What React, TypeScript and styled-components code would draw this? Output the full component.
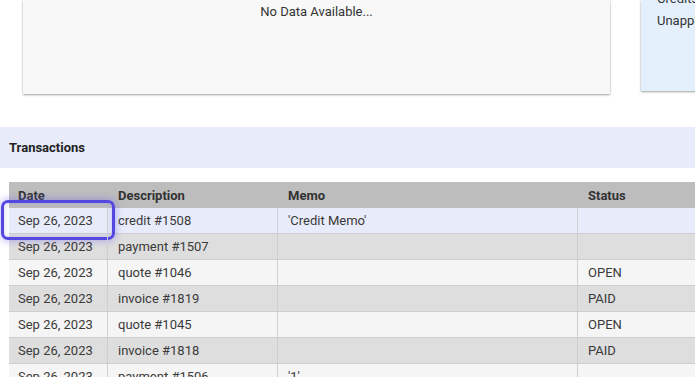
import React from 'react';
import styled, {createGlobalStyle} from 'styled-components';

const GlobalStyle = createGlobalStyle`
    html, body {
        margin: 0;
        padding: 0;
        background: #ffffff;
        overflow: hidden;
    }
    body {
        font-family: Roboto, "Liberation Sans", Arial, sans-serif;
        color: #333333;
    }
`;

interface Transaction {
    date: string;
    description: string;
    memo: string;
    status: string;
}

const transactions: Transaction[] = [
    {date: 'Sep 26, 2023', description: 'credit #1508', memo: "'Credit Memo'", status: ''},
    {date: 'Sep 26, 2023', description: 'payment #1507', memo: '', status: ''},
    {date: 'Sep 26, 2023', description: 'quote #1046', memo: '', status: 'OPEN'},
    {date: 'Sep 26, 2023', description: 'invoice #1819', memo: '', status: 'PAID'},
    {date: 'Sep 26, 2023', description: 'quote #1045', memo: '', status: 'OPEN'},
    {date: 'Sep 26, 2023', description: 'invoice #1818', memo: '', status: 'PAID'},
    {date: 'Sep 26, 2023', description: 'payment #1506', memo: "'1'", status: ''},
];

const columns = [
    {key: 'date', label: 'Date', width: 99},
    {key: 'description', label: 'Description', width: 170},
    {key: 'memo', label: 'Memo', width: 300},
    {key: 'status', label: 'Status', width: 220},
] as const;

const App = () => {
    return (
        <Page>
            <GlobalStyle/>
            <CardsRow>
                <EmptyCard>
                    <EmptyText>{'No Data Available...'}</EmptyText>
                </EmptyCard>
                <SummaryCard>
                    <SummaryLines>
                        <SummaryLine>{'Credits: $0.00'}</SummaryLine>
                        <SummaryLine>{'Unapplied Payments: $0.00'}</SummaryLine>
                    </SummaryLines>
                </SummaryCard>
            </CardsRow>
            <SectionBar>
                <SectionTitle>{'Transactions'}</SectionTitle>
            </SectionBar>
            <Table>
                <HeaderRow>
                    {columns.map((col) => (
                        <HeaderCell
                            key={col.key}
                            $width={col.width}
                        >
                            {col.label}
                        </HeaderCell>
                    ))}
                </HeaderRow>
                {transactions.map((t, i) => (
                    <Row
                        key={t.description}
                        $tone={i === 0 ? 'selected' : (i % 2 === 1 ? 'dark' : 'light')}
                    >
                        {columns.map((col) => (
                            <Cell
                                key={col.key}
                                $width={col.width}
                                $focused={i === 0 && col.key === 'date'}
                            >
                                {t[col.key]}
                            </Cell>
                        ))}
                    </Row>
                ))}
            </Table>
        </Page>
    );
};

const Page = styled.div`
    width: 695px;
    height: 377px;
    overflow: hidden;
    display: flex;
    flex-direction: column;

    & > * {
        flex-shrink: 0;
    }
`;

const CardsRow = styled.div`
    display: flex;
    align-items: flex-start;
    gap: 31px;
    padding-left: 23px;
    height: 95px;
`;

const EmptyCard = styled.div`
    width: 587px;
    height: 94px;
    flex: none;
    background: #f8f8f8;
    box-shadow: 0 1px 2px rgba(0, 0, 0, 0.35), 0 0 1px rgba(0, 0, 0, 0.15);
    display: flex;
    justify-content: center;
`;

const EmptyText = styled.div`
    font-size: 13px;
    line-height: 16px;
    margin-top: 4px;
    color: #333333;
`;

const SummaryCard = styled.div`
    flex: none;
    width: 220px;
    height: 91px;
    background: #e3f0fc;
    box-shadow: 0 1px 2px rgba(0, 0, 0, 0.35), 0 0 1px rgba(0, 0, 0, 0.15);
    overflow: hidden;
`;

const SummaryLines = styled.div`
    margin-top: -12px;
    padding-left: 16px;
    display: flex;
    flex-direction: column;
`;

const SummaryLine = styled.div`
    font-size: 13px;
    line-height: 22px;
    color: #333333;
    white-space: nowrap;
`;

const SectionBar = styled.div`
    margin-top: 32px;
    height: 41px;
    background: #e8ecfa;
    display: flex;
    align-items: center;
    padding-left: 9px;
`;

const SectionTitle = styled.div`
    font-size: 13px;
    font-weight: 700;
    color: #222222;
`;

const Table = styled.div`
    margin-top: 14px;
    margin-left: 9px;
    display: flex;
    flex-direction: column;

    & > * {
        flex-shrink: 0;
    }
`;

const HeaderRow = styled.div`
    display: flex;
    height: 26px;
    background: #bdbdbd;
`;

const HeaderCell = styled.div<{$width: number}>`
    position: relative;
    flex: none;
    width: ${({$width}) => $width}px;
    box-sizing: border-box;
    padding: 0 9px;
    display: flex;
    align-items: center;
    font-size: 13px;
    font-weight: 700;
    color: #333333;

    & + & {
        padding-left: 10px;
    }

    & + &::before {
        content: '';
        position: absolute;
        left: 0;
        top: 6px;
        width: 1px;
        height: 8px;
        background: #dcdcdc;
    }
`;

const rowTones = {
    selected: '#e8ebf9',
    dark: '#dedede',
    light: '#f5f5f5',
};

const Row = styled.div<{$tone: keyof typeof rowTones}>`
    display: flex;
    height: 26px;
    box-sizing: border-box;
    background: ${({$tone}) => rowTones[$tone]};
    border-bottom: 1px solid #cfcfcf;
`;

const Cell = styled.div<{$width: number; $focused?: boolean}>`
    position: relative;
    flex: none;
    width: ${({$width}) => $width}px;
    box-sizing: border-box;
    padding: 0 9px;
    display: flex;
    align-items: center;
    font-size: 13px;
    color: #3a3a3a;
    white-space: nowrap;
    border-right: 1px solid #cfcfcf;

    & + & {
        padding-left: 10px;
    }

    &::after {
        content: '';
        display: ${({$focused}) => ($focused ? 'block' : 'none')};
        position: absolute;
        left: -8px;
        right: -8px;
        top: -8px;
        bottom: -7px;
        border: 3px solid #5548e0;
        border-radius: 7px;
        box-shadow: 0 0 6px 2px rgba(110, 100, 240, 0.35), inset 0 0 5px rgba(110, 100, 240, 0.3);
        pointer-events: none;
    }
`;

export default App;
